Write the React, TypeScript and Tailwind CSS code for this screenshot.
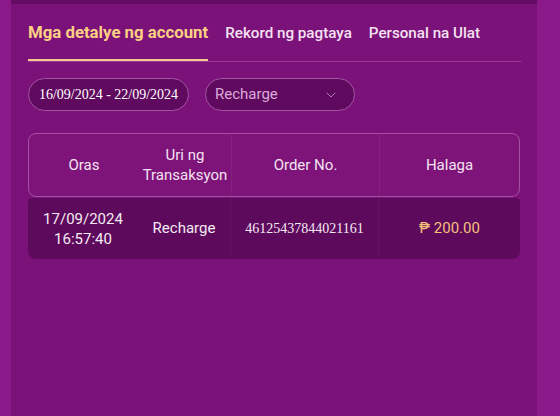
import { ChevronDown } from "lucide-react";

const tabs = ["Mga detalye ng account", "Rekord ng pagtaya", "Personal na Ulat"];

const cols = ["w-[110px]", "w-[92px]", "w-[148px]", "flex-1"];

export default function App() {
  return (
    <div className="flex h-[416px] w-[560px] bg-[#8a1a8a] font-['Roboto',sans-serif]">
      <div className="ml-[11px] flex w-[526px] flex-col border-t-[4px] border-[#640c63] bg-[#7b1279] pl-[17px] pr-[16px]">
        {/* tabs */}
        <div className="flex items-end gap-[17px] border-b border-[#9b3a99] pt-[16px]">
          {tabs.map((t, i) => (
            <div
              key={t}
              className={
                i === 0
                  ? "border-b-2 border-[#f7c98f] pb-[14px] text-[16.8px] font-bold text-[#fcd083]"
                  : "pb-[16px] text-[15.2px] font-medium text-[#f5e1f2]"
              }
            >
              {t}
            </div>
          ))}
        </div>

        {/* filters */}
        <div className="mt-[16px] flex gap-[16px]">
          <div className="flex h-[33px] w-[161px] items-center justify-center rounded-full border border-[#a354a2] bg-[#5f0a5e] font-['Liberation_Serif',serif] text-[14px] text-white">
            16/09/2024 - 22/09/2024
          </div>
          <div className="flex h-[33px] w-[150px] items-center justify-between rounded-full border border-[#a354a2] bg-[#5f0a5e] pl-[9px] pr-[15px] text-[15px] text-[#dba9da]">
            <span>Recharge</span>
            <ChevronDown className="h-[16px] w-[16px] text-[#c68ac5]" strokeWidth={1.3} />
          </div>
        </div>

        {/* table */}
        <div className="mt-[22px] w-[492px]">
          <div className="flex h-[64px] items-center rounded-[8px] border border-[#a451a3] bg-[#7e1479] text-[15px] text-[#f3e2f1]">
            {["Oras", "Uri ng\nTransaksyon", "Order No.", "Halaga"].map((h, i) => (
              <div
                key={h}
                className={`${cols[i]} flex h-full items-center justify-center whitespace-pre-line text-center leading-[20px] ${i > 1 ? "border-l border-[#86207f]" : ""}`}
              >
                {h}
              </div>
            ))}
          </div>
          <div className="mt-[1px] flex h-[61px] items-center rounded-b-[8px] rounded-t-[4px] bg-[#5d0a5c] text-[15px] text-[#f5eaf4]">
            <div className={`${cols[0]} flex h-full items-center justify-center text-center leading-[20px]`}>
              17/09/2024
              <br />
              16:57:40
            </div>
            <div className={`${cols[1]} flex h-full items-center justify-center`}>Recharge</div>
            <div className={`${cols[2]} flex h-full items-center justify-center border-l border-[#680f66] font-['Liberation_Serif',serif] text-[14px]`}>
              46125437844021161
            </div>
            <div className={`${cols[3]} flex h-full items-center justify-center border-l border-[#680f66] text-[#f6c07b]`}>
              ₱ 200.00
            </div>
          </div>
        </div>
      </div>
    </div>
  );
}
